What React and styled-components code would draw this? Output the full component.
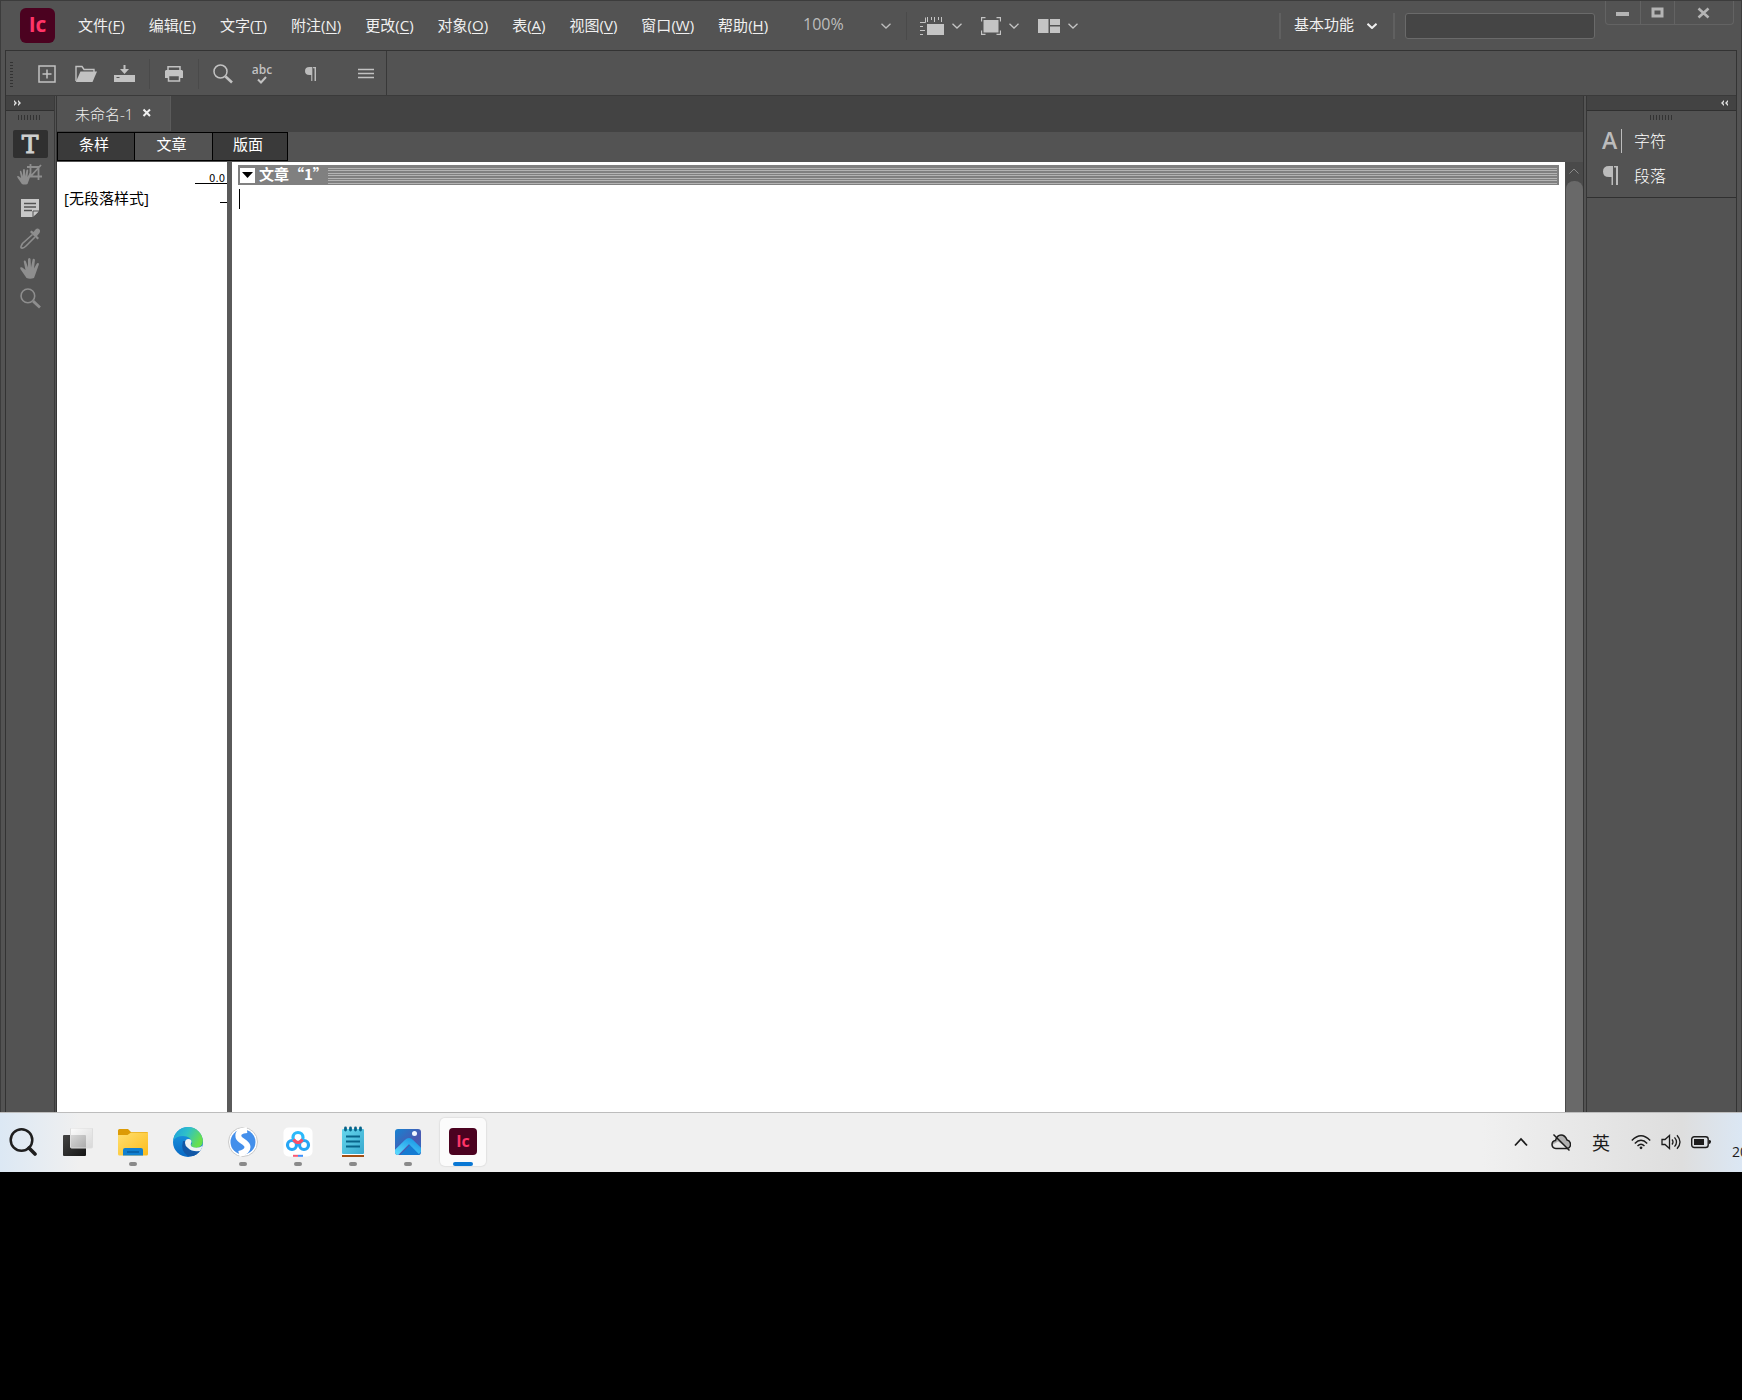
import React from 'react'
import styled, { createGlobalStyle } from 'styled-components'

const menus = [
  ['文件', 'F'],
  ['编辑', 'E'],
  ['文字', 'T'],
  ['附注', 'N'],
  ['更改', 'C'],
  ['对象', 'O'],
  ['表', 'A'],
  ['视图', 'V'],
  ['窗口', 'W'],
  ['帮助', 'H'],
]

export default function App() {
  return (
    <>
      <GlobalStyle />
      <Screen>
        <AppWindow>
          <TitleBar />
          <Body>
            <ControlBar />
            <Workspace>
              <ToolPanel />
              <DocumentArea />
              <PanelDock />
            </Workspace>
          </Body>
        </AppWindow>
        <Taskbar />
      </Screen>
    </>
  )
}

function TitleBar() {
  return (
    <StyledTitleBar>
      <Logo>Ic</Logo>
      <MenuBar>
        {menus.map(([name, key]) => (
          <MenuButton key={key}>
            {name}(<u>{key}</u>)
          </MenuButton>
        ))}
      </MenuBar>
      <SelectBox $width="88px" $size="16px" $color="#bdbdbd">
        <select aria-label="缩放级别">
          <option>100%</option>
        </select>
        <Chevron />
      </SelectBox>
      <ViewGroup>
        <ViewButton aria-label="视图选项">
          <RulerIcon />
          <Chevron />
        </ViewButton>
        <ViewButton aria-label="屏幕模式">
          <ScreenModeIcon />
          <Chevron />
        </ViewButton>
        <ViewButton aria-label="排列文档">
          <ArrangeIcon />
          <Chevron />
        </ViewButton>
      </ViewGroup>
      <TitleRight>
        <Divider />
        <SelectBox $width="92px" $pad="0 6px 0 3px" $color="#f0f0f0">
          <select aria-label="工作区">
            <option>基本功能</option>
          </select>
          <Chevron bold />
        </SelectBox>
        <Divider />
        <SearchInput type="text" aria-label="搜索" />
        <WindowControls>
          <WindowButton $width="34px" aria-label="最小化">
            <svg width="14" height="12">
              <rect y="5" width="13" height="4" fill="#b4b4b4" />
            </svg>
          </WindowButton>
          <WindowButton $width="34px" aria-label="最大化">
            <svg width="14" height="12">
              <rect x="2" y="2" width="9" height="7" fill="none" stroke="#b4b4b4" strokeWidth="3" />
            </svg>
          </WindowButton>
          <WindowButton $width="59px" aria-label="关闭">
            <svg width="14" height="12">
              <path d="M1.5 1.5 11.5 10.5M11.5 1.5 1.5 10.5" stroke="#b4b4b4" strokeWidth="2.6" />
            </svg>
          </WindowButton>
        </WindowControls>
      </TitleRight>
    </StyledTitleBar>
  )
}

function ControlBar() {
  return (
    <StyledControlBar>
      <ControlStrip>
        <SideGrip />
        <ControlGroup $lead="22px">
          <IconButton aria-label="新建">
            <svg width="18" height="18" fill="none" stroke="#c2c2c2">
              <rect x="1" y="1" width="16" height="16" strokeWidth="1.5" />
              <path d="M9 4.5v9M4.5 9h9" strokeWidth="1.5" />
            </svg>
          </IconButton>
          <IconButton aria-label="打开">
            <svg width="22" height="18">
              <path d="M1 16V1.5h6l2 3h10V7" fill="none" stroke="#c2c2c2" strokeWidth="1.4" />
              <path d="M5.5 6.5h16.5L17.5 17H.8z" fill="#c2c2c2" />
            </svg>
          </IconButton>
          <IconButton aria-label="保存">
            <svg width="22" height="18">
              <path d="M0 10h21v7H0z" fill="#c2c2c2" />
              <path d="M10.5 0v5" stroke="#c2c2c2" strokeWidth="2" />
              <path d="M6 4h9l-4.5 5z" fill="#c2c2c2" />
              <path d="M2.5 12.5h3" stroke="#535353" />
            </svg>
          </IconButton>
        </ControlGroup>
        <ControlGroup $lead="12px" $line>
          <IconButton aria-label="打印">
            <svg width="20" height="18">
              <path d="M4 5V1.8h12V5" fill="none" stroke="#c2c2c2" strokeWidth="1.5" />
              <path d="M2 5h16l1 1v7h-3v-3H4v3H1V6z" fill="#c2c2c2" />
              <rect x="4.5" y="10.5" width="11" height="5.5" fill="none" stroke="#c2c2c2" strokeWidth="1.5" />
            </svg>
          </IconButton>
        </ControlGroup>
        <ControlGroup $lead="12px" $line>
          <IconButton aria-label="查找">
            <Magnifier size={20} color="#c2c2c2" />
          </IconButton>
          <IconButton aria-label="拼写检查">
            <SpellMark>
              abc
              <svg width="10" height="8">
                <path d="M1 3.5 4 6.5 9 1" fill="none" stroke="#c2c2c2" strokeWidth="2" />
              </svg>
            </SpellMark>
          </IconButton>
        </ControlGroup>
        <ControlGroup $lead="12px">
          <IconButton aria-label="显示隐藏字符">
            <Pilcrow width={11} height={14} />
          </IconButton>
        </ControlGroup>
        <ControlGroup $lead="20px">
          <IconButton aria-label="更多">
            <svg width="16" height="12" stroke="#c2c2c2" strokeWidth="1.4">
              <path d="M0 1.5h16M0 5.5h16M0 9.5h16" />
            </svg>
          </IconButton>
        </ControlGroup>
      </ControlStrip>
    </StyledControlBar>
  )
}

function ToolPanel() {
  return (
    <StyledToolPanel>
      <PanelHeader aria-label="展开面板">
        <DoubleArrow />
      </PanelHeader>
      <TopGrip />
      <ToolList>
        <ToolButton $active aria-label="文字工具">
          <TypeGlyph>T</TypeGlyph>
        </ToolButton>
        <ToolButton aria-label="位置工具">
          <svg width="26" height="22">
            <g transform="translate(0 6) scale(.75)">
              <HandShape />
            </g>
            <path
              d="M13.5 1v12.5H25M10 4h11.5v13M13.5 13.5 24 2"
              fill="none"
              stroke="#8e8e8e"
              strokeWidth="1.8"
            />
          </svg>
        </ToolButton>
      </ToolList>
      <ToolList>
        <ToolButton aria-label="附注工具">
          <svg width="18" height="18">
            <path d="M0 0h18v12l-6 6H0z" fill="#c8c8c8" />
            <path d="M3 4.5h12M3 8h12M3 11.5h8" stroke="#535353" strokeWidth="1.4" />
            <path d="M12 18v-6h6" fill="none" stroke="#535353" />
            <path d="m13.5 16.5 3-3V13h-3z" fill="#c8c8c8" />
          </svg>
        </ToolButton>
        <ToolButton aria-label="吸管工具">
          <svg width="20" height="21">
            <path
              d="M12.5 6.5l-10 9Q0 19.5 1.5 20q2 .5 4.5-2L15 9"
              fill="none"
              stroke="#8e8e8e"
              strokeWidth="1.6"
            />
            <path
              d="m10 4 7.5 7.5L19 10l-2-2 2.5-3Q21 2 18.5.8 17 0 15.5 1.5l-2 2.5-2-1.5z"
              fill="#8e8e8e"
            />
          </svg>
        </ToolButton>
        <ToolButton aria-label="抓手工具">
          <svg width="20" height="21">
            <HandShape />
          </svg>
        </ToolButton>
        <ToolButton aria-label="缩放工具">
          <Magnifier size={21} color="#8e8e8e" />
        </ToolButton>
      </ToolList>
    </StyledToolPanel>
  )
}

function DocumentArea() {
  return (
    <StyledDocument>
      <TabBar>
        <DocumentTab>
          未命名-1
          <CloseButton aria-label="关闭文档">
            <svg width="10" height="10">
              <path d="m1.5 1.5 6.5 6.5M8 1.5 1.5 8" stroke="#f0f0f0" strokeWidth="2" />
            </svg>
          </CloseButton>
        </DocumentTab>
      </TabBar>
      <ViewTabs>
        <ViewTab $width="78px">条样</ViewTab>
        <ViewTab $width="78px" $active>
          文章
        </ViewTab>
        <ViewTab $width="75px">版面</ViewTab>
      </ViewTabs>
      <Editor>
        <StylePane>
          <DepthMark>0.0</DepthMark>
          <StyleRow>
            [无段落样式]
            <Tick />
          </StyleRow>
        </StylePane>
        <StoryPane>
          <StoryHeader>
            <StoryToggle aria-label="折叠文章">
              <svg width="11" height="6">
                <path d="M0 0h11L5.5 6z" />
              </svg>
            </StoryToggle>
            <StoryTitle>文章“1”</StoryTitle>
            <StoryLines />
          </StoryHeader>
          <Caret />
        </StoryPane>
        <ScrollBar>
          <ScrollArrow aria-label="向上滚动">
            <svg width="10" height="6">
              <path d="M.5 5.5 5 1l4.5 4.5" fill="none" stroke="#8a8a8a" />
            </svg>
          </ScrollArrow>
          <ScrollThumb />
        </ScrollBar>
      </Editor>
    </StyledDocument>
  )
}

function PanelDock() {
  return (
    <StyledDock>
      <PanelHeader $end aria-label="折叠面板">
        <DoubleArrow left />
      </PanelHeader>
      <DockGroup>
        <TopGrip />
        <DockButton>
          <CharacterMark>A</CharacterMark>
          字符
        </DockButton>
        <DockButton>
          <DockIcon>
            <Pilcrow width={15} height={19} />
          </DockIcon>
          段落
        </DockButton>
      </DockGroup>
    </StyledDock>
  )
}

function Taskbar() {
  return (
    <StyledTaskbar>
      <TaskList>
        <TaskButton aria-label="搜索">
          <svg width="28" height="30" fill="none" stroke="#1f1f1f">
            <circle cx="12.5" cy="13" r="10.8" strokeWidth="2.5" />
            <path d="m20 21 6 6" strokeWidth="3.6" strokeLinecap="round" />
          </svg>
        </TaskButton>
        <TaskButton aria-label="任务视图">
          <svg width="30" height="28">
            <defs>
              <linearGradient id="pane" x1="0" y1="0" x2="1" y2="1">
                <stop offset="0" stopColor="#fff" stopOpacity=".85" />
                <stop offset="1" stopColor="#d0d0d0" stopOpacity=".75" />
              </linearGradient>
              <linearGradient id="dark" x1="0" y1="0" x2="1" y2="1">
                <stop offset="0" stopColor="#444" />
                <stop offset="1" stopColor="#151515" />
              </linearGradient>
            </defs>
            <rect y="7" width="23" height="21" rx="1" fill="url(#dark)" />
            <rect x="7.5" width="22" height="20" rx="1" fill="url(#pane)" stroke="#ddd" />
          </svg>
        </TaskButton>
        <TaskButton $running aria-label="文件资源管理器">
          <svg width="30" height="28">
            <defs>
              <linearGradient id="folder" x1="0" y1="0" x2="1" y2="1">
                <stop offset="0" stopColor="#ffdf70" />
                <stop offset="1" stopColor="#fcbc1c" />
              </linearGradient>
            </defs>
            <path d="M0 2.5Q0 1 1.5 1H10l3 3h15.5Q30 4 30 5v8H0z" fill="#dc9b06" />
            <path d="M0 7h9.5L13 4.5h17V26q0 1.5-1.5 1.5h-27Q0 27.5 0 26z" fill="url(#folder)" />
            <path d="M5 27.5V22q0-2 2-2h16q2 0 2 2v5.5z" fill="#1180d0" />
            <path d="M9 24h12" stroke="#065497" strokeWidth="1.2" />
          </svg>
        </TaskButton>
        <TaskButton aria-label="Edge">
          <EdgeIcon />
        </TaskButton>
        <TaskButton $running aria-label="搜狗浏览器">
          <svg width="30" height="30">
            <circle cx="15" cy="15" r="14.5" fill="#fff" stroke="#c9c9c9" />
            <circle cx="15" cy="15" r="12.5" fill="#438feb" />
            <path
              d="M19 3Q9 4 10.5 10c1 4 9 5 9 10q0 5-8.500 7"
              fill="none"
              stroke="#fff"
              strokeWidth="6"
            />
          </svg>
        </TaskButton>
        <TaskButton $running aria-label="百度网盘">
          <svg width="30" height="30">
            <rect x=".5" y=".5" width="29" height="29" rx="5" fill="#fff" />
            <g fill="none" strokeWidth="3.2">
              <circle cx="9" cy="18" r="4.5" stroke="#26a6f5" />
              <circle cx="21" cy="18" r="4.5" stroke="#26a6f5" />
              <circle cx="15" cy="10.5" r="5" stroke="#2cb9fa" />
              <path d="M10.5 12.5q4.5 6 9 0" stroke="#fa4e68" />
            </g>
            <path d="M10 28.8h5" stroke="#fa5b75" strokeWidth="2" />
            <path d="M15 28.8h5" stroke="#3e91fa" strokeWidth="2" />
          </svg>
        </TaskButton>
        <TaskButton $running aria-label="记事本">
          <svg width="24" height="32">
            <defs>
              <linearGradient id="note" x1="0" y1="0" x2="1" y2="1">
                <stop offset="0" stopColor="#66d7ed" />
                <stop offset="1" stopColor="#38a8ce" />
              </linearGradient>
            </defs>
            <path d="M1 28h22v3H1z" fill="#a44e12" />
            <path d="M1 27h22v2H1z" fill="#fff" />
            <rect x="1" y="3" width="22" height="25" rx="1" fill="url(#note)" />
            <path d="M5 10.5h14M5 15.5h14M5 20.5h14" stroke="#08648a" strokeWidth="2" />
            <path
              d="M4.5 2v2M9.5 2v2M14.5 2v2M19.5 2v2"
              stroke="#08648a"
              strokeWidth="2.8"
              strokeLinecap="round"
            />
          </svg>
        </TaskButton>
        <TaskButton $running aria-label="照片">
          <svg width="26" height="26">
            <defs>
              <linearGradient id="photo" x1="0" y1="0" x2="1" y2="1">
                <stop offset="0" stopColor="#1683d2" />
                <stop offset=".6" stopColor="#4b58b0" />
                <stop offset="1" stopColor="#2672c7" />
              </linearGradient>
              <linearGradient id="hill" x1="0" y1="1" x2="1" y2="0">
                <stop offset="0" stopColor="#5edcff" />
                <stop offset="1" stopColor="#1795e5" />
              </linearGradient>
              <clipPath id="photoClip">
                <rect width="26" height="26" rx="3" />
              </clipPath>
            </defs>
            <g clipPath="url(#photoClip)">
              <path d="M0 0h26v26H0z" fill="url(#photo)" />
              <path d="M5 26 15 16l11 9v1z" fill="#157bd2" />
              <path d="m0 25 12-12q2-2 4 0l10 10" fill="none" stroke="url(#hill)" strokeWidth="6" />
              <circle cx="19.5" cy="4.5" r="2.5" fill="#f2f7ff" />
            </g>
          </svg>
        </TaskButton>
        <TaskButton $active aria-label="InCopy">
          <Logo $small>Ic</Logo>
        </TaskButton>
      </TaskList>
      <Tray>
        <TrayButton aria-label="显示隐藏的图标">
          <svg width="16" height="10">
            <path d="M1 8.5 7 2l6 6.5" fill="none" stroke="#1c1c1c" strokeWidth="1.8" />
          </svg>
        </TrayButton>
        <TrayButton aria-label="云同步">
          <svg width="20" height="18">
            <path
              d="M5 15.5Q1 15 1 11.5 1 8 4.5 7.5 6 2 10 2t6 5q3.5 1 3.5 4.5T16 15.5z"
              fill="#b0b0b0"
              stroke="#1c1c1c"
              strokeWidth="1.5"
            />
            <path d="M5 14.5q-3-.5-3-3l5-3 9 6z" fill="#e8e8e8" />
            <path d="m2.5 1.5 16 16" stroke="#1c1c1c" strokeWidth="1.5" />
          </svg>
        </TrayButton>
        <TrayButton>英</TrayButton>
        <TrayGroup aria-label="网络和声音">
          <svg width="20" height="16" fill="none" stroke="#1c1c1c" strokeWidth="1.4">
            <path d="M.8 6.5q9.2-9.5 18.4 0M3.8 9.5q6.2-6.5 12.4 0M6.5 12q3.5-3.5 7 0" />
            <circle cx="10" cy="13.8" r="1.4" fill="#1c1c1c" stroke="none" />
          </svg>
          <svg width="20" height="16" fill="none" stroke="#1c1c1c" strokeWidth="1.3">
            <path d="M1 5.5h3l4.5-4v13l-4.5-4H1zM11 5.5q2 2.5 0 5M13.5 3.3q4 4.7 0 9.4M16 1.2q6 6.8 0 13.6" />
          </svg>
          <svg width="20" height="14">
            <rect
              x=".7"
              y="1.7"
              width="16.5"
              height="10.8"
              rx="2.5"
              fill="none"
              stroke="#1c1c1c"
              strokeWidth="1.4"
            />
            <rect x="3" y="4" width="10" height="6" fill="#1c1c1c" />
            <path d="M18 5q2.5 0 2 2t-2 2z" fill="#1c1c1c" />
          </svg>
        </TrayGroup>
        <Clock>20</Clock>
      </Tray>
    </StyledTaskbar>
  )
}

function Chevron({ bold }) {
  return (
    <svg width="10" height="6">
      <path d="M.5.8 5 5 9.5.8" fill="none" stroke="currentColor" strokeWidth={bold ? 2 : 1.3} />
    </svg>
  )
}

function DoubleArrow({ left }) {
  return (
    <svg width="8" height="6">
      <path
        d={left ? 'M3 0 0 3l3 3V4L2 3l1-1zM7 0 4 3l3 3V4L6 3l1-1z' : 'M1 0l3 3-3 3V4l1-1-1-1zM5 0l3 3-3 3V4l1-1-1-1z'}
        fill="#e0e0e0"
      />
    </svg>
  )
}

function Magnifier({ size, color }) {
  return (
    <svg width={size} height={size} viewBox="0 0 20 20" fill="none" stroke={color}>
      <circle cx="7.5" cy="7.5" r="6.5" strokeWidth="1.5" />
      <path d="m12.5 12.5 6.5 6" strokeWidth="2.6" />
    </svg>
  )
}

function Pilcrow({ width, height }) {
  return (
    <svg width={width} height={height} viewBox="0 0 15 19">
      <path d="M10 0v19H8.5v-8H6Q0 11 0 5.5T6 0zM11 0h4v19h-2V1.5h-2z" fill="#bcbcbc" />
    </svg>
  )
}

function HandShape() {
  return (
    <path
      d="M6.5 20 1 12Q-.5 9.8.8 9.3q1.2-.4 2.5 1L5.5 12 3.800 4q-.2-1.500.8-1.600 1-.1 1.400 1.300L8 9.500V1.500Q8 0 9.300 0t1.300 1.500l.4 8L12.500 2q.3-1.500 1.400-1.300 1.200.2 1 1.700L14 10.500l2.700-4.700q.7-1.200 1.600-.7 1 .5.400 1.900L15.500 16 14 20q-4 1.500-7.500 0z"
      fill="#8e8e8e"
    />
  )
}

function RulerIcon() {
  return (
    <svg width="24" height="18">
      <path d="M7 7h17v11H7z" fill="#c4c4c4" />
      <path
        d="M0 5.5h5.5V.5M7.500 0v5M11.500 0v3M14.500 0v5M18.500 0v3M21.500 0v5M0 9.5h3M0 13.5h5M0 17.5h3"
        fill="none"
        stroke="#c4c4c4"
      />
    </svg>
  )
}

function ScreenModeIcon() {
  return (
    <svg width="20" height="18">
      <path d="M2.5 3h15v12.5h-15z" fill="#c4c4c4" />
      <path
        d="M.5 4.5v-4h4M15.5.5h4v4M19.5 13.5v4h-4M4.5 17.5h-4v-4"
        fill="none"
        stroke="#c4c4c4"
        strokeWidth="1.3"
      />
    </svg>
  )
}

function ArrangeIcon() {
  return (
    <svg width="22" height="14" fill="#c4c4c4">
      <path d="M0 0h10.5v14H0zM12 0h10v6H12zM12 7.5h10V14H12z" />
    </svg>
  )
}

function EdgeIcon() {
  return (
    <svg width="30" height="30">
      <defs>
        <linearGradient id="edgeTop" x1="0" y1="0" x2="1" y2=".4">
          <stop offset="0" stopColor="#1b9de0" />
          <stop offset=".5" stopColor="#2fc0c8" />
          <stop offset="1" stopColor="#69e04c" />
        </linearGradient>
        <linearGradient id="edgeSide" x1="0" y1="0" x2="0" y2="1">
          <stop offset="0" stopColor="#1e9ee4" />
          <stop offset="1" stopColor="#0868c4" />
        </linearGradient>
        <clipPath id="edgeClip">
          <circle cx="15" cy="15" r="15" />
        </clipPath>
      </defs>
      <g clipPath="url(#edgeClip)">
        <path d="M0 0h30v30H0z" fill="url(#edgeSide)" />
        <path d="M10 14Q7 24 15 29h8l6-6q-9 3-13-1-3-3-3-8z" fill="#1257a6" />
        <path d="M0 14Q1 0 15 0q15 0 15 13 0 8-8 8-6-1-3-5-1-7-9-7-7 0-10 5z" fill="url(#edgeTop)" />
        <path d="M12 16q0-4 3.5-4 3 0 3 3-2 3.5 1 5 5 2 10.5-1.5v5Q20 26 15 21q-3-2-3-5z" fill="#f0f2f3" />
      </g>
    </svg>
  )
}

const GlobalStyle = createGlobalStyle`
  * {
    box-sizing: border-box;
  }

  body {
    margin: 0;
    background: #000;
    color: #f0f0f0;
    font: 15px/20px "Open Sans", "Noto Sans CJK SC", sans-serif;
  }

  button,
  select,
  input {
    margin: 0;
    padding: 0;
    border: 0;
    background: none;
    color: inherit;
    font: inherit;
  }

  svg {
    display: block;
    flex: none;
  }
`
const Screen = styled.div`
  display: flex;
  flex-flow: column;
  min-height: 100vh;
  padding-bottom: 228px;
  overflow: hidden;
`
const AppWindow = styled.main`
  display: flex;
  flex: 1;
  flex-flow: column;
  padding: 0 4px;
  border: 1px solid #3c3c3c;
  border-bottom: 0;
  background: #535353;
`
const StyledTitleBar = styled.header`
  display: flex;
  align-items: center;
  height: 49px;
  padding: 0 3px 0 15px;
`
const Logo = styled.span`
  display: flex;
  align-items: center;
  justify-content: center;
  width: ${({ $small }) => ($small ? '28px' : '35px')};
  height: ${({ $small }) => ($small ? '27px' : '35px')};
  padding-bottom: ${({ $small }) => ($small ? '2px' : '4px')};
  border-radius: ${({ $small }) => ($small ? '4px' : '6px')};
  background: #4b0220;
  color: #ff3568;
  font-size: ${({ $small }) => ($small ? '16px' : '21px')};
  font-weight: 700;
`
const MenuBar = styled.nav`
  display: flex;
  gap: 24px;
  margin: 0 35px 0 23px;
  padding-bottom: 2px;
`
const MenuButton = styled.button`
  white-space: nowrap;

  u {
    text-underline-offset: 2px;
  }
`
const SelectBox = styled.label`
  display: grid;
  align-items: center;
  width: ${({ $width }) => $width};
  padding: ${({ $pad }) => $pad || '0'};
  color: ${({ $color }) => $color};
  font-size: ${({ $size }) => $size || '15px'};

  > * {
    grid-area: 1 / 1;
  }

  select {
    appearance: none;
    width: 100%;
    padding-bottom: 4px;
  }

  svg {
    justify-self: end;
    pointer-events: none;
  }
`
const ViewGroup = styled.div`
  display: flex;
  gap: 19px;
  height: 28px;
  margin-left: 15px;
  padding-left: 13px;
  border-left: 1px solid #4a4a4a;
`
const ViewButton = styled.button`
  display: flex;
  align-items: center;
  gap: 8px;
  color: #c4c4c4;
`
const TitleRight = styled.div`
  display: flex;
  align-items: center;
  align-self: stretch;
  gap: 10px;
  margin-left: auto;
`
const Divider = styled.span`
  width: 2px;
  height: 26px;
  background: #606060;
`
const SearchInput = styled.input`
  width: 190px;
  height: 26px;
  padding: 0 6px;
  border: 1px solid #6a6a6a;
  border-radius: 3px;
  background: #454545;
`
const WindowControls = styled.div`
  display: flex;
  align-self: flex-start;
  border: 1px solid #636363;
  border-top: 0;
  border-radius: 0 0 4px 4px;
`
const WindowButton = styled.button`
  display: flex;
  align-items: center;
  justify-content: center;
  width: ${({ $width }) => $width};
  height: 23px;

  & + & {
    border-left: 1px solid #636363;
  }
`
const Body = styled.div`
  display: flex;
  flex: 1;
  flex-flow: column;
  border: 1px solid #333;
  border-bottom: 0;
`
const StyledControlBar = styled.div`
  display: flex;
  height: 45px;
  border-bottom: 1px solid #3a3a3a;
`
const ControlStrip = styled.div`
  display: flex;
  align-items: center;
  padding: 2px 8px 0 4px;
  border-right: 1px solid #383838;
`
const SideGrip = styled.span`
  width: 3px;
  height: 25px;
  background: repeating-linear-gradient(#333 0 1px, transparent 1px 3px);
`
const ControlGroup = styled.div`
  display: flex;
  align-items: center;
  gap: 15px;
  height: 30px;
  padding: 0 12px 0 ${({ $lead }) => $lead};
  border-left: ${({ $line }) => ($line ? '1px solid #4a4a4a' : '0')};

  &:last-child {
    padding-right: 0;
  }
`
const IconButton = styled.button`
  display: flex;
  align-items: center;
  justify-content: center;
  width: 24px;
  height: 24px;
`
const SpellMark = styled.span`
  display: flex;
  flex-flow: column;
  align-items: center;
  color: #c2c2c2;
  font-size: 12px;
  font-weight: 600;
  line-height: 12px;
`
const Workspace = styled.div`
  display: flex;
  flex: 1;
`
const StyledToolPanel = styled.aside`
  width: 49px;
  border-right: 1px solid #3a3a3a;
`
const PanelHeader = styled.button`
  display: flex;
  align-items: center;
  justify-content: ${({ $end }) => ($end ? 'flex-end' : 'flex-start')};
  width: 100%;
  height: 15px;
  padding: 0 7px;
  border-bottom: 1px solid #303030;
  background: #434343;
`
const TopGrip = styled.div`
  width: 24px;
  height: 5px;
  margin: 4px auto 10px;
  background: repeating-linear-gradient(90deg, #333 0 1px, transparent 1px 3px);
`
const ToolList = styled.div`
  display: flex;
  flex-flow: column;
  align-items: center;
  gap: 2px;
  margin-bottom: 6px;
`
const ToolButton = styled.button`
  display: flex;
  align-items: center;
  justify-content: center;
  width: 35px;
  height: 28px;
  border-radius: 2px;
  background: ${({ $active }) => ($active ? '#303030' : 'none')};
`
const TypeGlyph = styled.span`
  padding-top: 2px;
  color: #d0d0d0;
  font: 400 25px/24px "DejaVu Serif", serif;
  -webkit-text-stroke: 1px #d0d0d0;
`
const StyledDocument = styled.section`
  display: flex;
  flex: 1;
  flex-flow: column;
  margin: 0 2px 0 1px;
  border: solid #363636;
  border-width: 0 1px;
`
const TabBar = styled.div`
  display: flex;
  height: 36px;
  padding-bottom: 1px;
  background: #434343;
`
const DocumentTab = styled.div`
  display: flex;
  align-items: center;
  gap: 9px;
  padding: 0 18px;
  border-right: 1px solid #5b5b5b;
  background: #535353;
  font-weight: 300;
`
const CloseButton = styled.button`
  padding-bottom: 2px;
`
const ViewTabs = styled.div`
  display: flex;
  height: 30px;
  padding-bottom: 1px;
`
const ViewTab = styled.button`
  width: ${({ $width }) => $width};
  padding: 0 4px 6px 0;
  border: 1px solid #000;
  background: ${({ $active }) => ($active ? '#535353' : '#3a3a3a')};
  color: #fff;

  & + & {
    border-left: 0;
  }
`
const Editor = styled.div`
  display: flex;
  flex: 1;
  background: #fff;
  color: #000;
`
const StylePane = styled.div`
  width: 175px;
  border-right: 5px solid #5a5a5a;
`
const DepthMark = styled.div`
  width: 32px;
  height: 22px;
  margin-left: auto;
  padding: 11px 2px 0 0;
  border-bottom: 1px solid #000;
  font: 10px/11px "DejaVu Sans", sans-serif;
  text-align: right;
`
const StyleRow = styled.div`
  display: flex;
  align-items: center;
  justify-content: space-between;
  height: 30px;
  padding: 0 0 2px 7px;
`
const Tick = styled.span`
  width: 7px;
  height: 1px;
  margin-top: 8px;
  background: #000;
`
const StoryPane = styled.div`
  flex: 1;
  padding: 3px 6px;
`
const StoryHeader = styled.div`
  display: flex;
  align-items: center;
  height: 20px;
  padding: 0 2px;
  background: #808080;
`
const StoryToggle = styled.button`
  display: flex;
  align-items: center;
  justify-content: center;
  width: 15px;
  height: 15px;
  background: #fff;
`
const StoryTitle = styled.h2`
  margin: 0 0 0 4px;
  padding-bottom: 2px;
  color: #fff;
  font: 700 15px/18px "Noto Sans CJK SC", sans-serif;
`
const StoryLines = styled.span`
  flex: 1;
  height: 16px;
  margin-top: 2px;
  background: repeating-linear-gradient(
    #b4b4b4 0 1px,
    #808080 1px 2px,
    #b4b4b4 2px 3px,
    #808080 3px 5px
  );
`
const Caret = styled.div`
  width: 1px;
  height: 20px;
  margin: 4px 0 0 1px;
  background: #000;
`
const ScrollBar = styled.div`
  display: flex;
  flex-flow: column;
  width: 18px;
  padding-left: 1px;
  background: #4a4a4a;
`
const ScrollArrow = styled.button`
  display: flex;
  align-items: center;
  justify-content: center;
  height: 19px;
  padding: 0 2px 2px 0;
`
const ScrollThumb = styled.div`
  flex: 1;
  border-radius: 8px 8px 0 0;
  background: #696969;
`
const StyledDock = styled.aside`
  width: 150px;
  border-left: 1px solid #363636;
`
const DockGroup = styled.div`
  display: flex;
  flex-flow: column;
  height: 87px;
  border-bottom: 1px solid #303030;

  ${TopGrip} {
    margin-bottom: 3px;
  }
`
const DockButton = styled.button`
  display: flex;
  align-items: center;
  gap: 12px;
  height: 35px;
  padding-left: 15px;
  color: #fff;
  font-size: 16px;
  font-weight: 300;
`
const DockIcon = styled.span`
  width: 20px;
  padding-left: 1px;
`
const CharacterMark = styled.span`
  width: 20px;
  padding-bottom: 2px;
  border-right: 1px solid #bcbcbc;
  color: #bcbcbc;
  font: 600 23px/22px "Open Sans", sans-serif;
  text-align: left;
`
const StyledTaskbar = styled.footer`
  display: flex;
  justify-content: space-between;
  height: 60px;
  padding-bottom: 2px;
  border-top: 1px solid #bdbdbd;
  background: linear-gradient(
    90deg,
    #dce8f4,
    #f0f0f0 80px,
    #f0f0f0 calc(100% - 260px),
    #dedede calc(100% - 60px),
    #dbe7f4
  );
  color: #1c1c1c;
`
const TaskList = styled.nav`
  display: flex;
  align-items: center;
  gap: 9px;
`
const TaskButton = styled.button`
  position: relative;
  display: flex;
  align-items: center;
  justify-content: center;
  width: 46px;
  height: 48px;
  border-radius: 5px;
  background: ${({ $active }) => ($active ? '#fbfbfb' : 'none')};
  box-shadow: ${({ $active }) => ($active ? '0 0 1px 1px #e2e2e2' : 'none')};

  &::after {
    position: absolute;
    bottom: 0;
    display: ${({ $active, $running }) => ($active || $running ? 'block' : 'none')};
    width: ${({ $active }) => ($active ? '20px' : '8px')};
    height: 4px;
    border-radius: 2px;
    background: ${({ $active }) => ($active ? '#0a78d4' : '#8a8a8a')};
    content: '';
  }
`
const Tray = styled.div`
  display: flex;
  align-items: center;
  gap: 21px;
`
const TrayButton = styled.button`
  font: 18px/24px "Noto Sans CJK SC", sans-serif;
`
const TrayGroup = styled.button`
  display: flex;
  align-items: center;
  gap: 10px;
`
const Clock = styled.time`
  width: 10px;
  padding-top: 20px;
  overflow: hidden;
  font-size: 14px;
`
